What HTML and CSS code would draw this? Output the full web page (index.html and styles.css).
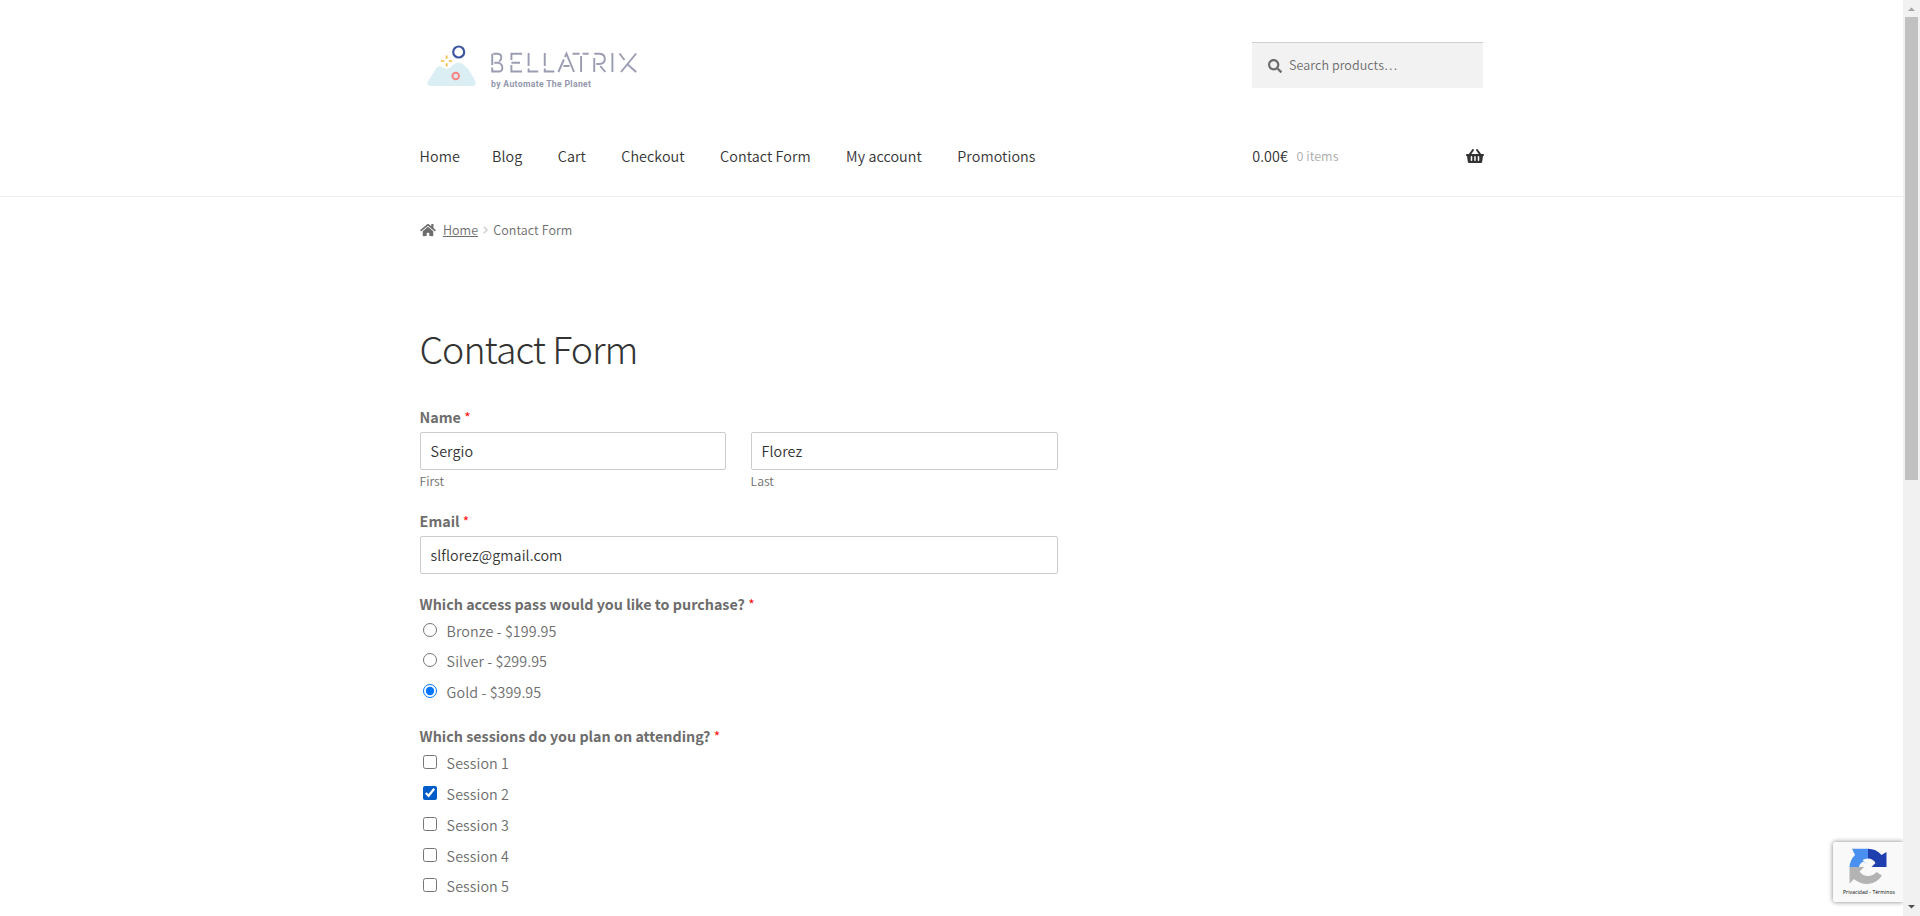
FILE: index.html
```html
<!DOCTYPE html>
<html lang="en">
<head>
<meta charset="utf-8">
<title>Contact Form – Bellatrix</title>
<link rel="stylesheet" href="styles.css">
</head>
<body>
<div class="page">
  <header class="header">
    <div class="wrap">
      <div class="top">
        <a class="logo">
          <svg viewBox="0 0 240 70" width="240" height="70">
            <path d="M18 51.500 L26 38.500 Q28 35.500 31 36.500 L36.500 39 L40 37.500 L43.500 34.500 Q47.500 31 52 33.500 L56 37 Q58 38.500 59.500 41 L65 50 Q67.500 55.500 62.500 56 L20.500 56 Q15.500 55.500 18 51.500Z" fill="#dbeef4"/>
            <circle cx="48.700" cy="22" r="5.500" fill="#fff" stroke="#3f579f" stroke-width="2.200"/>
            <circle cx="45.700" cy="46" r="3.300" fill="#e6e4ea" stroke="#f58585" stroke-width="2"/>
            <path d="M36.600 25.500v3.300M36.600 33.300v3.300M31 31h3.300M38.800 31h3.300" stroke="#f7b940" stroke-width="1.700" fill="none"/>
            <g fill="none" stroke="#9a9cb2" stroke-width="1.900" transform="translate(-11.200 0) scale(1.010 1)">
              <path d="M92.500 23.800V35M92.500 37.500V41.500H99Q102.500 41.500 102.500 37.700Q102.500 34 99 32.800H94.500M93.500 23.800H98Q101.500 24 101.500 27.500Q101.500 30 99.500 31.500"/>
              <path d="M122 23.800H111.500V30M111.500 32.800H120M111.500 35V41.500H122"/>
              <path d="M128.500 23V36M128.500 38.500V41.500H138M144.500 23V36M144.500 38.500V41.500H154"/>
              <path d="M158 42L163.500 29.500M164.500 27L166 23.700L173.500 42M163 36H169"/>
              <path d="M172 23.800H179M182 23.800H188M180.500 26V42"/>
              <path d="M193.500 42V28M193.500 23.800H199Q204 24.200 204 29Q204 33.500 199 34H195.500M199.500 36L204.500 42M211.500 23V42"/>
              <path d="M218.500 23.500L223.500 30M226 34L235 42M235 23.500L220 42"/>
            </g>
          </svg>
          <span class="tagline">by Automate The Planet</span>
        </a>
        <div class="search">
          <svg viewBox="0 0 512 512" width="14" height="14"><path fill="#6d6d6d" d="M505 442.700L405.300 343c-4.500-4.500-10.600-7-17-7H372c27.600-35.300 44-79.700 44-128C416 93.100 322.900 0 208 0S0 93.100 0 208s93.100 208 208 208c48.300 0 92.700-16.400 128-44v16.300c0 6.400 2.500 12.500 7 17l99.700 99.700c9.400 9.400 24.600 9.400 33.900 0l28.300-28.300c9.400-9.400 9.400-24.600.1-34zM208 336c-70.700 0-128-57.200-128-128 0-70.700 57.200-128 128-128 70.700 0 128 57.200 128 128 0 70.700-57.200 128-128 128z"/></svg>
          <span>Search products…</span>
        </div>
      </div>
      <div class="bar">
        <nav class="nav"><a>Home</a><a>Blog</a><a>Cart</a><a>Checkout</a><a>Contact Form</a><a>My account</a><a>Promotions</a></nav>
        <div class="cart"><span>0.00€</span><span class="count">0 items</span>
          <svg viewBox="0 0 576 512" width="18" height="16"><path fill="#333" d="M576 216v16c0 13.300-10.700 24-24 24h-8l-26.100 182.800C514.500 462.400 494.300 480 470.400 480H105.600c-23.900 0-44.100-17.600-47.500-41.200L32 256h-8c-13.300 0-24-10.700-24-24v-16c0-13.300 10.700-24 24-24h67.300l106.800-146.800c10.400-14.300 30.400-17.500 44.700-7.100 14.300 10.400 17.500 30.400 7.100 44.700L170.500 192h235l-79.400-109.200c-10.400-14.300-7.200-34.300 7.100-44.700 14.300-10.400 34.300-7.200 44.700 7.100L484.700 192H552c13.300 0 24 10.700 24 24zM312 392V280c0-13.300-10.700-24-24-24s-24 10.700-24 24v112c0 13.300 10.700 24 24 24s24-10.700 24-24zm112 0V280c0-13.300-10.700-24-24-24s-24 10.700-24 24v112c0 13.300 10.700 24 24 24s24-10.700 24-24zm-224 0V280c0-13.300-10.700-24-24-24s-24 10.700-24 24v112c0 13.300 10.700 24 24 24s24-10.700 24-24z"/></svg>
        </div>
      </div>
    </div>
  </header>
  <main class="wrap">
    <div class="crumbs">
      <svg viewBox="0 0 576 512" width="16" height="14"><path fill="#6d6d6d" d="M280.400 148.300L96 300.100V464c0 8.800 7.200 16 16 16l112.100-.3c8.800 0 15.900-7.200 15.900-16V368c0-8.800 7.200-16 16-16h64c8.800 0 16 7.200 16 16v95.600c0 8.900 7.200 16.100 16 16.100L464 480c8.800 0 16-7.200 16-16V300L295.700 148.300c-4.500-3.600-10.900-3.600-15.300 0zM571.600 251.500L488 182.600V44c0-6.600-5.400-12-12-12h-56c-6.600 0-12 5.400-12 12v72.600L318.500 43c-17.700-14.600-43.300-14.600-61 0L4.300 251.500c-5.100 4.200-5.800 11.800-1.600 16.900l25.500 31c4.200 5.100 11.800 5.900 16.900 1.600l235.200-193.700c4.500-3.600 10.900-3.600 15.300 0l235.200 193.700c5.100 4.200 12.700 3.500 16.900-1.600l25.500-31c4.200-5.200 3.400-12.700-1.600-16.900z"/></svg>
      <a>Home</a>
      <svg class="sep" viewBox="0 0 5 8" width="5" height="8"><path d="M.8.700L4 4L.8 7.300" fill="none" stroke="#ccc" stroke-width="1.400"/></svg>
      <span>Contact Form</span>
    </div>
    <h1>Contact Form</h1>
    <form class="form">
      <div class="label">Name <i>*</i></div>
      <div class="names">
        <div><input class="text" type="text" value="Sergio"><div class="sub">First</div></div>
        <div><input class="text" type="text" value="Florez"><div class="sub">Last</div></div>
      </div>
      <div class="label">Email <i>*</i></div>
      <input class="text" type="text" value="slflorez@gmail.com">
      <div class="label pass">Which access pass would you like to purchase? <i>*</i></div>
      <div class="choices">
        <label><input type="radio" name="pass">Bronze - $199.95</label>
        <label><input type="radio" name="pass">Silver - $299.95</label>
        <label><input type="radio" name="pass" checked>Gold - $399.95</label>
      </div>
      <div class="label sessions">Which sessions do you plan on attending? <i>*</i></div>
      <div class="choices choices-sessions">
        <label><input type="checkbox">Session 1</label>
        <label><input type="checkbox" class="active" checked>Session 2</label>
        <label><input type="checkbox">Session 3</label>
        <label><input type="checkbox">Session 4</label>
        <label><input type="checkbox">Session 5</label>
      </div>
    </form>
  </main>
  <div class="badge">
    <svg viewBox="0 0 38 38" width="38" height="38">
      <path d="M.500 19A18.500 18.500 0 0 1 6 7L3 .800H19V10.500Q16 10.500 13.500 12L18 16.500L14.500 13.500Q10.500 15 10 19Z" fill="#4a90f0"/>
      <path d="M19 .800A18 18 0 0 1 32.500 7L37.500 4V19H22.500L26.500 15Q24 10.500 19 10.500Z" fill="#1f3fae"/>
      <path d="M.500 19H15L10.500 23.500Q14 28 19 28Q24 28 27.500 24L33 27.500A18.300 18.300 0 0 1 5 31L.500 35.500Z" fill="#b3b3b3"/>
    </svg>
    <span>Privacidad - Términos</span>
  </div>
</div>
<div class="scroll">
  <svg viewBox="0 0 17 17" width="17" height="17"><path d="M5 11L8.500 7.500L12 11Z" fill="#a3a3a3"/></svg>
  <div class="thumb"></div>
  <svg class="down" viewBox="0 0 17 17" width="17" height="17"><path d="M5 6L8.500 9.500L12 6Z" fill="#505050"/></svg>
</div>
</body>
</html>
```
FILE: styles.css
```css
* { box-sizing: border-box; }
body {
  margin: 0;
  height: 916px;
  overflow: hidden;
  display: flex;
  background: #fff;
  color: #6d6d6d;
  font: 350 14.320px/24px "Noto Sans CJK SC", "Open Sans", sans-serif;
  letter-spacing: .080px;
}
svg { display: block; flex: none; }
.page { flex: 1; position: relative; height: 916px; overflow: hidden; }
.wrap { width: 1063px; margin-left: 419.600px; }
.header { height: 197px; border-bottom: 1px solid #f0f0f0; }
.top { display: flex; justify-content: space-between; padding-top: 30px; height: 144px; }
.logo { position: relative; margin-left: -9.600px; height: 70px; }
.tagline {
  position: absolute;
  left: 81px;
  top: 46px;
  font: bold 8.600px/16px Roboto, sans-serif;
  letter-spacing: .350px;
  color: #9497ad;
  white-space: nowrap;
}
.search {
  display: flex;
  align-items: center;
  gap: 7.500px;
  width: 231px;
  height: 46px;
  margin-top: 12px;
  padding: 0 16px;
  background: #f2f2f2;
  border-top: 1px solid #cfcfcf;
  font-size: 12.500px;
}
.search span { margin-top: -2px; }
.bar { display: flex; justify-content: space-between; color: #333; }
.nav { display: flex; gap: 35.400px; }
.nav a:first-child { margin-right: -3.200px; }
.cart { display: flex; width: 231px; margin-right: -.600px; }
.cart svg { margin: 4px -.600px 0 auto; }
.count { margin-left: 8.500px; font-size: 12.500px; color: #aaa; }
.crumbs { display: flex; align-items: center; height: 24px; margin-top: 21px; font-size: 12.500px; }
.crumbs a { margin-left: 7.300px; text-decoration: underline; }
.sep { margin: 0 5px; }
h1 {
  margin: 76px 0 0;
  height: 60px;
  font-size: 37.500px;
  line-height: 60px;
  font-weight: 300;
  letter-spacing: -1px;
  color: #333;
}
.form { width: 638px; margin-top: 27px; }
.label { height: 27px; font-weight: 700; letter-spacing: 0; }
.label i { font-style: normal; font-weight: 350; font-size: 14px; color: #f00; }
.names { display: grid; grid-template-columns: 306px 307px; gap: 25px; height: 77px; }
.text {
  display: block;
  width: 100%;
  height: 38px;
  padding: 0 10px 1px;
  border: 1px solid #ccc;
  border-radius: 2px;
  background: #fff;
  color: #333;
  font: inherit;
  letter-spacing: inherit;
}
.sub { margin-top: -1px; font-size: 12.200px; line-height: 24px; letter-spacing: 0; }
.pass { margin-top: 18px; }
.sessions { margin-top: 14px; }
.choices { display: grid; grid-auto-rows: 30.400px; }
.choices-sessions { grid-auto-rows: 30.800px; }
.choices label { display: flex; }
.choices input { width: 14px; height: 14px; margin: 4px 10px 0 3px; }
.active { accent-color: #005cc8; }
.badge {
  position: absolute;
  right: 0;
  bottom: 14px;
  width: 70px;
  height: 60px;
  padding: 6px 0 0 16px;
  background: #f9f9f9;
  border-radius: 2px 0 0 2px;
  box-shadow: 0 0 5px #808080;
}
.badge span { display: block; margin-left: -6px; font: 5px/13px "Open Sans", sans-serif; color: #000; white-space: nowrap; }
.scroll { display: flex; flex-direction: column; width: 17px; height: 916px; background: #f1f1f1; }
.thumb { width: 13px; height: 463px; margin-left: 2px; background: #c1c1c1; }
.down { margin-top: auto; }
```
